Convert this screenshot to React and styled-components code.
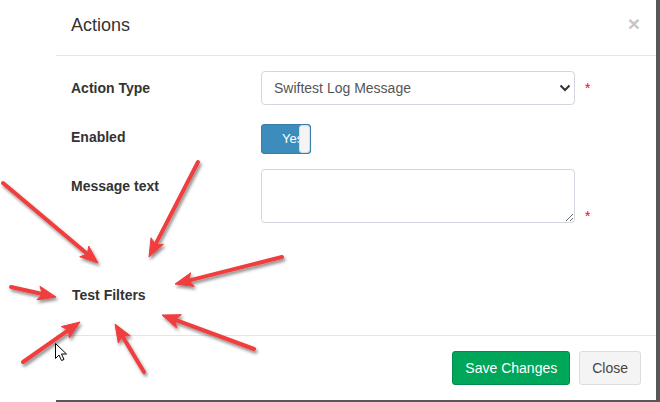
import React from "react";
import styled, { createGlobalStyle } from "styled-components";

const GlobalStyle = createGlobalStyle`
  html, body { margin: 0; padding: 0; background: #fff; }
  body { font-family: "Liberation Sans", Arial, sans-serif; }
  * { box-sizing: border-box; }
`;

const Page = styled.div`
  position: relative;
  width: 660px;
  height: 402px;
  display: flex;
  overflow: hidden;
  background: #fff;
`;

const Gutter = styled.div`
  width: 56px;
  flex: none;
`;

const Backdrop = styled.div`
  flex: 1;
  background: #575757;
  padding: 0 4px 2px 0;
  display: flex;
`;

const Modal = styled.div`
  width: 600px;
  height: 400px;
  background: #fff;
  display: flex;
  flex-direction: column;
`;

const Header = styled.div`
  height: 56px;
  padding: 15px;
  border-bottom: 1px solid #e5e5e5;
  display: flex;
  justify-content: space-between;
  align-items: flex-start;
`;

const Title = styled.h4`
  margin: 0;
  font-size: 18px;
  font-weight: normal;
  line-height: 1.2;
  color: #333;
`;

const CloseX = styled.span`
  font-size: 21px;
  font-weight: bold;
  line-height: 1;
  color: #c6c6c6;
  margin-top: -2px;
  margin-right: 1px;
`;

const Body = styled.div`
  flex: 1;
  padding: 15px;
`;

const Row = styled.div`
  display: flex;
  align-items: flex-start;
  margin-bottom: ${(p) => p.$gap}px;
`;

const Label = styled.div`
  width: 190px;
  flex: none;
  font-size: 14px;
  font-weight: bold;
  line-height: 20px;
  color: #333;
  padding-top: ${(p) => p.$pt}px;
`;

const Control = styled.div`
  position: relative;
  width: 314px;
  flex: none;
`;

const Required = styled.span`
  color: #f00;
  font-size: 14px;
  line-height: 1;
  margin-left: 10px;
  align-self: ${(p) => p.$align};
  padding-top: ${(p) => p.$pt}px;
`;

const Select = styled.select`
  appearance: none;
  -webkit-appearance: none;
  width: 100%;
  height: 34px;
  padding: 6px 12px;
  font-family: "Liberation Sans", Arial, sans-serif;
  font-size: 14px;
  color: #555;
  background: #fff;
  border: 1px solid #d2d6de;
  border-radius: 4px;
`;

const Chevron = styled.svg`
  position: absolute;
  right: 4px;
  top: 13px;
  pointer-events: none;
`;

const Toggle = styled.div`
  position: relative;
  width: 50px;
  height: 30px;
  background: #3c8dbc;
  border: 1px solid #367fa9;
  border-radius: 3px;
  overflow: hidden;
  color: #fff;
  font-size: 13px;
  line-height: 28px;
  padding-left: 20px;
`;

const Handle = styled.span`
  position: absolute;
  right: 0;
  top: 0;
  bottom: 0;
  width: 11px;
  background: #f4f4f4;
  border: 1px solid #ddd;
  border-radius: 3px;
`;

const TextArea = styled.textarea`
  display: block;
  width: 100%;
  height: 54px;
  padding: 6px 12px;
  border: 1px solid #d2d6de;
  border-radius: 4px;
  font-family: "Liberation Sans", Arial, sans-serif;
  font-size: 14px;
  resize: vertical;
`;

const SectionTitle = styled.div`
  margin-top: 62px;
  margin-left: 1px;
  font-size: 14px;
  font-weight: bold;
  line-height: 20px;
  color: #333;
`;

const Footer = styled.div`
  border-top: 1px solid #e5e5e5;
  padding: 15px;
  display: flex;
  justify-content: flex-end;
  gap: 9px;
`;

const Button = styled.button`
  height: 34px;
  padding: 6px 12px;
  font-family: "Liberation Sans", Arial, sans-serif;
  font-size: 14px;
  line-height: 20px;
  border-radius: 3px;
  border: 1px solid ${(p) => (p.$primary ? "#008d4c" : "#ddd")};
  background: ${(p) => (p.$primary ? "#00a65a" : "#f4f4f4")};
  color: ${(p) => (p.$primary ? "#fff" : "#444")};
`;

const Overlay = styled.svg`
  position: absolute;
  left: 0;
  top: 0;
  pointer-events: none;
`;

const arrows = [
  [3, 183, 98, 263],
  [198, 162, 149, 257],
  [282, 257, 175, 284],
  [11, 287, 56, 297],
  [23, 362, 80, 322],
  [144, 372, 115, 324],
  [254, 349, 162, 315],
];

function Arrow({ t }) {
  const [x1, y1, x2, y2] = t;
  const dx = x2 - x1;
  const dy = y2 - y1;
  const len = Math.hypot(dx, dy);
  const ux = dx / len;
  const uy = dy / len;
  const nx = -uy;
  const ny = ux;
  const L = 18;
  const W = 7;
  const bx = x2 - ux * L;
  const by = y2 - uy * L;
  const nbx = x2 - ux * (L - 4);
  const nby = y2 - uy * (L - 4);
  const pts = [
    [x2, y2],
    [bx + nx * W, by + ny * W],
    [nbx, nby],
    [bx - nx * W, by - ny * W],
  ]
    .map((p) => p.join(","))
    .join(" ");
  return (
    <g>
      <line
        x1={x1}
        y1={y1}
        x2={bx + ux * 3}
        y2={by + uy * 3}
        stroke="#f03d3d"
        strokeWidth="4"
        strokeLinecap="round"
      />
      <polygon points={pts} fill="#f03d3d" stroke="#f03d3d" strokeWidth="1" strokeLinejoin="round" />
    </g>
  );
}

export default function App() {
  return (
    <>
      <GlobalStyle />
      <Page>
        <Gutter />
        <Backdrop>
          <Modal>
            <Header>
              <Title>Actions</Title>
              <CloseX>×</CloseX>
            </Header>
            <Body>
              <Row $gap={19}>
                <Label $pt={7}>Action Type</Label>
                <Control>
                  <Select defaultValue="log">
                    <option value="log">Swiftest Log Message</option>
                  </Select>
                  <Chevron width="12" height="8" viewBox="0 0 12 8">
                    <path d="M1.5 1.5 L6 6 L10.5 1.5" fill="none" stroke="#333" strokeWidth="2" />
                  </Chevron>
                </Control>
                <Required $align="flex-start" $pt={10}>*</Required>
              </Row>
              <Row $gap={15}>
                <Label $pt={3}>Enabled</Label>
                <Control>
                  <Toggle>
                    Yes
                    <Handle />
                  </Toggle>
                </Control>
              </Row>
              <Row $gap={0}>
                <Label $pt={7}>Message text</Label>
                <Control>
                  <TextArea />
                </Control>
                <Required $align="flex-end" $pt={0}>*</Required>
              </Row>
              <SectionTitle>Test Filters</SectionTitle>
            </Body>
            <Footer>
              <Button $primary>Save Changes</Button>
              <Button>Close</Button>
            </Footer>
          </Modal>
        </Backdrop>
        <Overlay width="660" height="402" viewBox="0 0 660 402">
          <defs>
            <filter id="shadow" x="-20%" y="-20%" width="140%" height="140%">
              <feDropShadow dx="1.5" dy="2.5" stdDeviation="1.6" floodColor="#000" floodOpacity="0.45" />
            </filter>
          </defs>
          <g filter="url(#shadow)">
            {arrows.map((a, i) => (
              <Arrow key={i} t={a} />
            ))}
          </g>
          <g transform="translate(55.5,343.5)">
            <path
              d="M0 0 L0 15 L3.5 11.5 L6 17 L8.5 16 L6 10.5 L11 10.5 Z"
              fill="#fff"
              stroke="#000"
              strokeWidth="1"
              strokeLinejoin="round"
            />
          </g>
        </Overlay>
      </Page>
    </>
  );
}
